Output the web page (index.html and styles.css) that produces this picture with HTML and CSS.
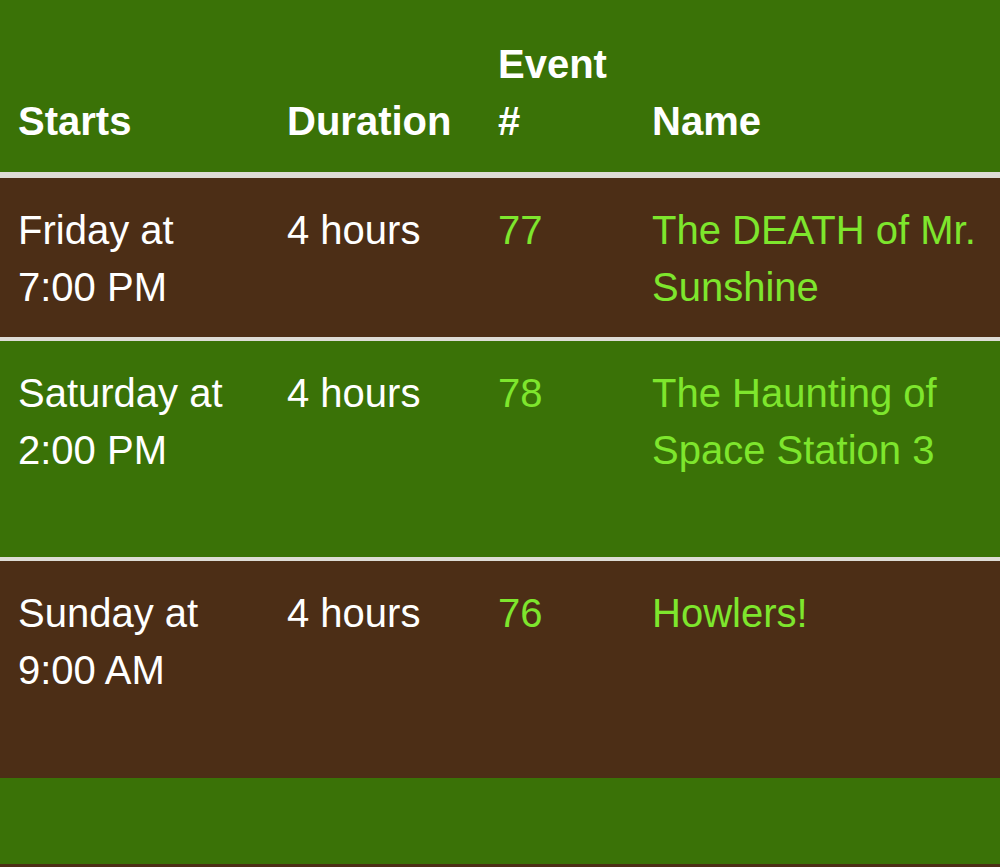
FILE: index.html
```html
<!DOCTYPE html>
<html>
<head>
<meta charset="utf-8">
<link rel="stylesheet" href="styles.css">
</head>
<body>
<div class="schedule">
  <div class="row head">
    <div class="cell">Starts</div>
    <div class="cell">Duration</div>
    <div class="cell">Event<br>#</div>
    <div class="cell">Name</div>
  </div>
  <div class="row brown r1">
    <div class="cell">Friday at<br>7:00 PM</div>
    <div class="cell">4 hours</div>
    <div class="cell"><a class="link" href="#">77</a></div>
    <div class="cell"><a class="link" href="#">The DEATH of Mr. Sunshine</a></div>
  </div>
  <div class="row green r2">
    <div class="cell">Saturday at<br>2:00 PM</div>
    <div class="cell">4 hours</div>
    <div class="cell"><a class="link" href="#">78</a></div>
    <div class="cell"><a class="link" href="#">The Haunting of Space Station 3</a></div>
  </div>
  <div class="row brown r3">
    <div class="cell">Sunday at<br>9:00 AM</div>
    <div class="cell">4 hours</div>
    <div class="cell"><a class="link" href="#">76</a></div>
    <div class="cell"><a class="link" href="#">Howlers!</a></div>
  </div>
  <div class="footer"></div>
  <div class="next"></div>
</div>
</body>
</html>
```
FILE: styles.css
```css
html, body {
  margin: 0;
  padding: 0;
  background: #3a7207;
}
.schedule {
  font-family: "Liberation Sans", Arial, sans-serif;
  font-size: 40px;
  line-height: 57px;
  color: #ffffff;
  display: flex;
  flex-direction: column;
}
.row {
  display: grid;
  grid-template-columns: 269px 211px 154px 1fr;
  padding-left: 18px;
  box-sizing: border-box;
}
.cell {
  padding-right: 8px;
}
.head {
  font-weight: bold;
  height: 178px;
  align-items: end;
  padding-bottom: 22px;
  border-bottom: 6px solid #dedcd6;
  background: #3a7207;
}
.brown {
  background: #4c2e16;
}
.green {
  background: #3a7207;
}
.row.r1, .row.r2, .row.r3 {
  padding-top: 24px;
  align-items: start;
}
.r1 {
  height: 163px;
  border-bottom: 4px solid #dedcd6;
}
.r2 {
  height: 220px;
  border-bottom: 4px solid #dedcd6;
}
.r3 {
  height: 217px;
}
.link {
  color: #7ee62d;
  text-decoration: none;
}
.footer {
  height: 86px;
  background: #3a7207;
}
.next {
  height: 20px;
  background: #4c2e16;
}
```
